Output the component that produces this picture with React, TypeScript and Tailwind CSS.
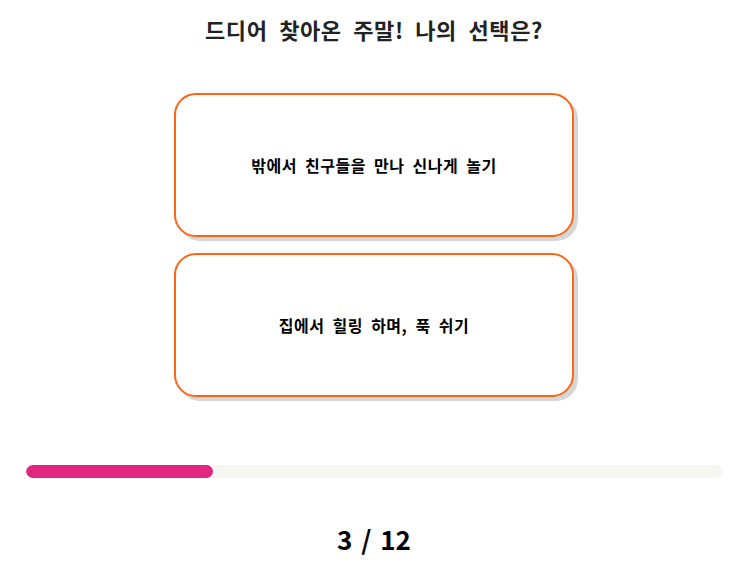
import React from "react";

const font = { fontFamily: '"Noto Sans CJK KR", "Noto Sans", sans-serif' };

export default function App() {
  return (
    <div className="w-[748px] h-[570px] bg-white flex flex-col items-center" style={font}>
      <h1 className="mt-[13px] h-[32px] leading-[32px] text-[22px] font-bold text-[#222222] tracking-[0.6px] [word-spacing:6px]">
        드디어 찾아온 주말! 나의 선택은?
      </h1>
      <div className="mt-[48px] flex flex-col gap-[16px]">
        <button className="w-[400px] h-[144px] rounded-[22px] border-2 border-[#ff6412] bg-white shadow-[4px_4px_0_#d6d6d6] flex items-center justify-center text-[16px] font-bold text-black tracking-[0.5px] [word-spacing:4px]">
          밖에서 친구들을 만나 신나게 놀기
        </button>
        <button className="w-[400px] h-[144px] rounded-[22px] border-2 border-[#ff6412] bg-white shadow-[4px_4px_0_#d6d6d6] flex items-center justify-center text-[16px] font-bold text-black tracking-[0.5px] [word-spacing:4px]">
          집에서 힐링 하며, 푹 쉬기
        </button>
      </div>
      <div className="mt-[68px] w-[696px] h-[13px] rounded-full bg-[#f8f6f2] overflow-hidden">
        <div className="h-full w-[187px] rounded-full bg-[#e32582]" />
      </div>
      <div className="mt-[43px] text-[26px] font-bold text-black leading-[36px] [word-spacing:3px]">3 / 12</div>
    </div>
  );
}
